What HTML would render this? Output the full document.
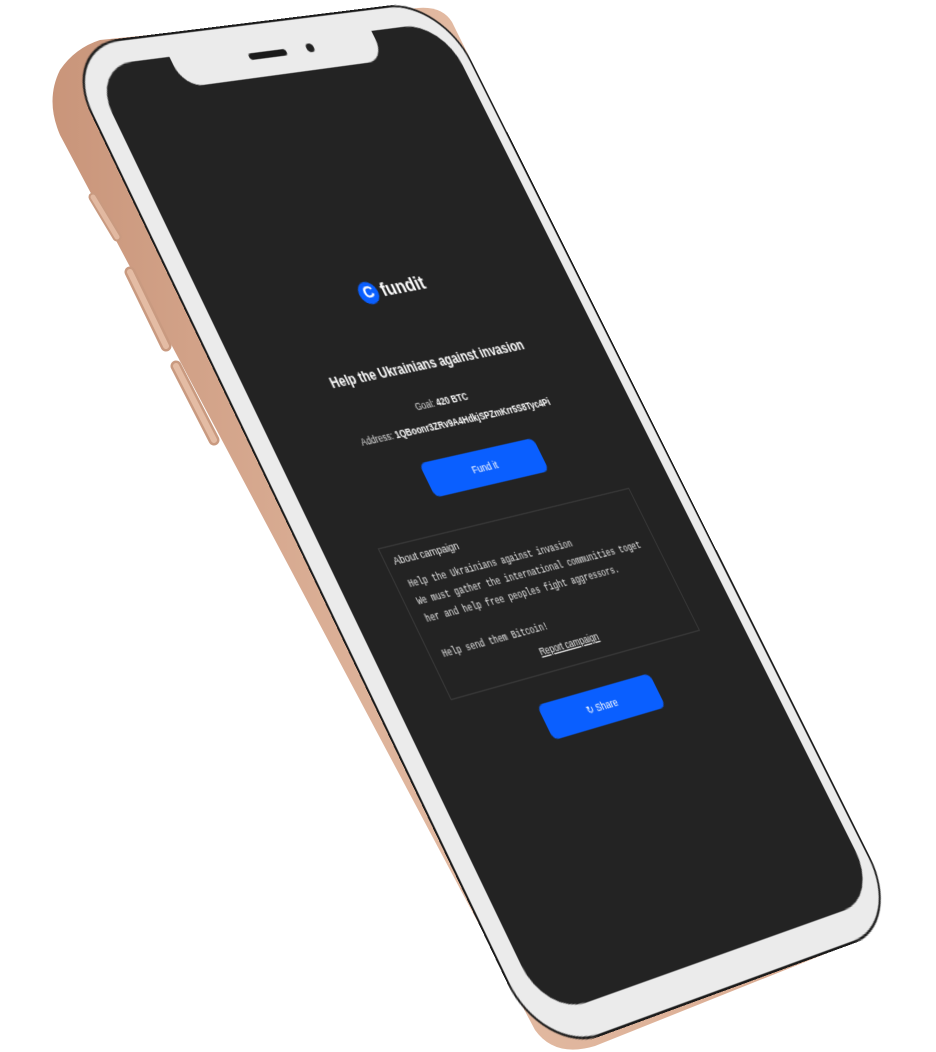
<!DOCTYPE html>
<html><head><meta charset="utf-8"><style>
html,body{margin:0;padding:0;background:#fff;width:936px;height:1052px;overflow:hidden;position:relative;font-family:"Liberation Sans",sans-serif}
#ph{position:absolute;left:0;top:0;width:375px;height:812px;transform-origin:0 0;
transform:matrix3d(1.02760,-0.11544,0,0.00020773, 0.52903,1.10932,0,-0.000059618, 0,0,1,0, 90,67,0,1)}
.bez{position:absolute;left:-18px;top:-19px;width:403px;height:856px;background:#ebebeb;border-radius:58px;box-shadow:0 0 0 2px #1b1b1b}
.scr{position:absolute;left:0;top:0;width:375px;height:812px;background:#232323;border-radius:42px;overflow:hidden;color:#fff}
.notch{position:absolute;left:80px;top:-2px;width:216px;height:30px;background:#ebebeb;border-radius:0 0 20px 20px}
.spk{position:absolute;left:78px;top:8px;width:40px;height:6px;background:#1a1a1a;border-radius:3px}
.cam{position:absolute;left:140px;top:6px;width:8px;height:8px;background:#222;border-radius:50%}
.c{position:absolute;left:0;width:375px;text-align:center;white-space:nowrap}
.btn{position:absolute;background:#0a5fff;border-radius:6px;color:#fff;font-size:9px;text-align:center}
.box{position:absolute;left:52px;top:432px;width:276px;height:130px;border:1px solid #393939;box-sizing:border-box}
.mono{font-family:"Liberation Mono",monospace;font-size:8.2px;line-height:15px;color:#e8e8e8;position:absolute;left:12px;top:26px;white-space:nowrap}
</style></head><body>
<svg width="936" height="1052" style="position:absolute;left:0;top:0">
<defs><linearGradient id="g" x1="0" y1="0" x2="1" y2="0"><stop offset="0" stop-color="#c9957a"/><stop offset="0.5" stop-color="#e3bba3"/><stop offset="1" stop-color="#d8a98f"/></linearGradient></defs>
<path d="M100,40 L418,8 Q442,6 452,22 L872,872 Q884,905 864,930 Q850,943 830,952 L595,1046 Q555,1058 535,1030 L60,135 Q45,100 60,70 Q75,48 100,40 Z" fill="url(#g)"/>
<path d="M93,197 L117,237" stroke="#c99a80" stroke-width="9" stroke-linecap="round"/>
<path d="M93,197 L117,237" stroke="#e2b9a1" stroke-width="5" stroke-linecap="round"/>
<path d="M130,272 L166,346" stroke="#c99a80" stroke-width="11" stroke-linecap="round"/>
<path d="M130,272 L166,346" stroke="#e4bca4" stroke-width="6" stroke-linecap="round"/>
<path d="M176,366 L214,440" stroke="#c99a80" stroke-width="11" stroke-linecap="round"/>
<path d="M176,366 L214,440" stroke="#e4bca4" stroke-width="6" stroke-linecap="round"/>
</svg>
<div id="ph">
 <div class="bez"></div>
 <div class="scr">
  <div class="c" style="top:215px;font-size:17px;font-weight:bold;">
   <span style="display:inline-block;width:20px;height:20px;border-radius:50%;background:#0a5fff;vertical-align:middle;line-height:20px;font-size:15px;margin-right:3px">C</span><span style="vertical-align:middle">fundit</span></div>
  <div class="c" style="top:287px;font-size:12px;font-weight:bold;">Help the Ukrainians against invasion</div>
  <div class="c" style="top:322px;font-size:8.5px;color:#ddd;left:-6px">Goal: <b style="color:#fff">420 BTC</b></div>
  <div class="c" style="top:341px;font-size:8.5px;color:#ddd">Address: <b style="color:#fff">1QBoonr3ZRv9A4HdkjSPZmKrr5S8Tyc4Pi</b></div>
  <div class="btn" style="left:130px;top:373px;width:125px;height:30px;line-height:30px">Fund it</div>
  <div class="box">
   <div style="position:absolute;left:8px;top:7px;font-size:9.5px;color:#eee">About campaign</div>
   <div class="mono">Help the Ukrainians against invasion<br>We must gather the international communities toget<br>her and help free peoples fight aggressors.<br><br>Help send them Bitcoin!</div>
   <div style="position:absolute;left:0;width:100%;text-align:center;top:106px;font-size:8.5px;color:#eee;text-decoration:underline">Report campaign</div>
  </div>
  <div class="btn" style="left:130px;top:584px;width:125px;height:30px;line-height:30px">&#x21BB; Share</div>
  <div class="notch"><div class="spk"></div><div class="cam"></div></div>
 </div>
</div>
</body></html>
